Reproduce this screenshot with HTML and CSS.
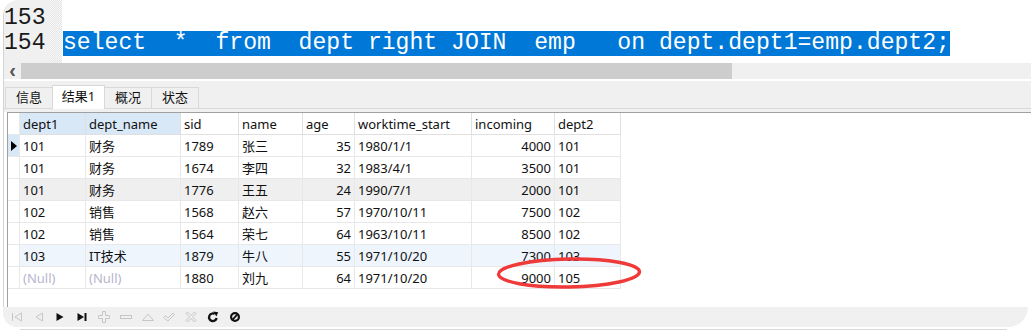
FILE: index.html
```html
<!DOCTYPE html>
<html lang="zh-CN">
<head>
    <meta charset="UTF-8">
    <title>查询结果</title>
    <link rel="stylesheet" href="styles.css">
</head>
<body>

<div class="window">
    <div class="editor">
        <div class="gutter">
            <div class="ln">153</div>
            <div class="ln">154</div>
        </div>
        <div class="fold"></div>
        <div class="code">
            <div class="line"></div>
            <div class="line"><span class="sel">select  *  from  dept right JOIN  emp   on dept.dept1=emp.dept2;</span></div>
        </div>
    </div>

    <div class="hscroll">
        <div class="arrow">&lsaquo;</div>
        <div class="thumb"></div>
    </div>

    <div class="tabwrap">
        <div class="tabbar">
            <div class="tab">信息</div>
            <div class="tab active">结果1</div>
            <div class="tab">概况</div>
            <div class="tab">状态</div>
        </div>
    </div>

    <div class="results">
        <div class="grid">
            <div class="row head">
                <div class="cell ind"></div>
                <div class="cell picked">dept1</div>
                <div class="cell picked">dept_name</div>
                <div class="cell">sid</div>
                <div class="cell">name</div>
                <div class="cell">age</div>
                <div class="cell">worktime_start</div>
                <div class="cell">incoming</div>
                <div class="cell">dept2</div>
            </div>
            <div class="row">
                <div class="cell ind current"><span class="caret"></span></div>
                <div class="cell">101</div><div class="cell">财务</div><div class="cell">1789</div><div class="cell">张三</div>
                <div class="cell num">35</div><div class="cell">1980/1/1</div><div class="cell num">4000</div><div class="cell">101</div>
            </div>
            <div class="row">
                <div class="cell ind"></div>
                <div class="cell">101</div><div class="cell">财务</div><div class="cell">1674</div><div class="cell">李四</div>
                <div class="cell num">32</div><div class="cell">1983/4/1</div><div class="cell num">3500</div><div class="cell">101</div>
            </div>
            <div class="row hover">
                <div class="cell ind"></div>
                <div class="cell">101</div><div class="cell">财务</div><div class="cell">1776</div><div class="cell">王五</div>
                <div class="cell num">24</div><div class="cell">1990/7/1</div><div class="cell num">2000</div><div class="cell">101</div>
            </div>
            <div class="row">
                <div class="cell ind"></div>
                <div class="cell">102</div><div class="cell">销售</div><div class="cell">1568</div><div class="cell">赵六</div>
                <div class="cell num">57</div><div class="cell">1970/10/11</div><div class="cell num">7500</div><div class="cell">102</div>
            </div>
            <div class="row">
                <div class="cell ind"></div>
                <div class="cell">102</div><div class="cell">销售</div><div class="cell">1564</div><div class="cell">荣七</div>
                <div class="cell num">64</div><div class="cell">1963/10/11</div><div class="cell num">8500</div><div class="cell">102</div>
            </div>
            <div class="row alt">
                <div class="cell ind"></div>
                <div class="cell">103</div><div class="cell">IT技术</div><div class="cell">1879</div><div class="cell">牛八</div>
                <div class="cell num">55</div><div class="cell">1971/10/20</div><div class="cell num">7300</div><div class="cell">103</div>
            </div>
            <div class="row">
                <div class="cell ind"></div>
                <div class="cell null">(Null)</div><div class="cell null">(Null)</div><div class="cell">1880</div><div class="cell">刘九</div>
                <div class="cell num">64</div><div class="cell">1971/10/20</div><div class="cell num">9000</div><div class="cell">105</div>
            </div>
        </div>
    </div>
</div>

<div class="toolbar">
    <span class="tool"><svg viewBox="0 0 12 12"><path d="M1.5 2v8M10.5 2L4 6l6.5 4z" fill="none" stroke="#c6c6c6"/></svg></span>
    <span class="tool"><svg viewBox="0 0 12 12"><path d="M9.5 2L3 6l6.5 4z" fill="none" stroke="#c6c6c6"/></svg></span>
    <span class="tool"><svg viewBox="0 0 12 12"><path d="M2.5 2l7 4-7 4z" fill="#111"/></svg></span>
    <span class="tool"><svg viewBox="0 0 12 12"><path d="M1.5 2l6.5 4-6.5 4z" fill="#111"/><rect x="8.5" y="2" width="2" height="8" fill="#111"/></svg></span>
    <span class="tool"><svg viewBox="0 0 12 12"><path d="M4.5 0.5h3v4h4v3h-4v4h-3v-4h-4v-3h4z" fill="none" stroke="#c6c6c6"/></svg></span>
    <span class="tool"><svg viewBox="0 0 12 12"><rect x="0.5" y="4.5" width="11" height="3" fill="none" stroke="#c6c6c6"/></svg></span>
    <span class="tool"><svg viewBox="0 0 12 12"><path d="M0.5 9.5L6 3l5.5 6.5z" fill="none" stroke="#c6c6c6"/></svg></span>
    <span class="tool"><svg viewBox="0 0 12 12"><path d="M0.5 6.5l2-2 2.5 2.5 5-5 1.5 1.5-6.5 6.5z" fill="none" stroke="#c6c6c6"/></svg></span>
    <span class="tool"><svg viewBox="0 0 12 12"><path d="M1 2.5L2.5 1 6 4.5 9.5 1 11 2.5 7.5 6 11 9.5 9.5 11 6 7.5 2.5 11 1 9.5 4.5 6z" fill="none" stroke="#c6c6c6"/></svg></span>
    <span class="tool"><svg viewBox="0 0 12 12"><path d="M9.6 7A3.8 3.8 0 1 1 7.6 2.9" fill="none" stroke="#111" stroke-width="2.3"/><path d="M6.2 0.6L11.2 1.2 9.4 5.6z" fill="#111"/></svg></span>
    <span class="tool"><svg viewBox="0 0 12 12"><circle cx="6" cy="6" r="3.9" fill="none" stroke="#111" stroke-width="2.2"/><path d="M8.4 3.4L3.6 8.6" stroke="#111" stroke-width="1.8"/></svg></span>
</div>
<div class="edge"></div>

<svg class="mark" width="160" height="40" viewBox="0 0 160 40">
    <ellipse cx="80" cy="19" rx="70.5" ry="14" fill="none" stroke="#ef3a3a" stroke-width="3.4" transform="rotate(-1 80 19)"/>
</svg>

</body>
</html>
```

FILE: styles.css
```css
body { margin: 0; width: 1031px; height: 334px; overflow: hidden; background: #fff; position: relative; font-family: "Noto Sans", "Noto Sans CJK SC", sans-serif; font-size: 13px; color: #111; }

.window { margin-left: 3px; border-left: 1px solid #d4d4d4; border-top-left-radius: 16px; overflow: hidden; }

/* sql editor */
.editor { display: flex; height: 63px; font-family: "Liberation Mono", monospace; font-size: 23.1px; }
.gutter { width: 46px; background: #f0f0f0; padding-top: 6px; color: #1a1a1a; }
.ln { height: 25px; line-height: 25px; }
.fold { width: 12px; background: repeating-conic-gradient(#e4e4e4 0 25%, #fafafa 0 50%) 0 0 / 2px 2px; }
.code { flex: 1; padding-top: 6px; padding-left: 1px; }
.line { height: 25px; line-height: 25px; white-space: pre; }
.sel { display: inline-block; height: 25px; background: #0078d7; color: #fff; }

.hscroll { display: flex; height: 16px; background: #f0f0f0; }
.arrow { width: 17px; font-family: "Liberation Sans", sans-serif; font-size: 20px; font-weight: bold; line-height: 14px; text-align: center; color: #555; }
.thumb { width: 711px; background: #cdcdcd; }

/* result tabs */
.tabwrap { margin-top: 2px; background: #f0f0f0; padding-bottom: 3px; }
.tabbar { display: flex; align-items: flex-end; height: 27px; padding-left: 1px; border-bottom: 1px solid #d9d9d9; }
.tab { width: 46px; height: 20px; line-height: 19px; margin-left: -1px; border: 1px solid #d9d9d9; border-bottom: none; text-align: center; background: #f0f0f0; }
.tab:first-child { margin-left: 0; }
.tab.active { width: 51px; height: 23px; line-height: 21px; margin-bottom: -1px; background: #fff; position: relative; }

/* data grid */
.results { background: #fff; padding-left: 3px; }
.grid { height: 194px; border-top: 1px solid #a0a0a0; border-left: 1px solid #a0a0a0; }
.row { display: grid; grid-template-columns: 12px 66px 95px 58px 64px 52px 117px 83px 66px; height: 22px; }
.cell { box-sizing: border-box; display: flex; align-items: center; padding: 0 3px; border-right: 1px solid #e8e8e8; border-bottom: 1px solid #e8e8e8; white-space: nowrap; }
.head .cell { border-color: #e0e0e0; }
.head .picked { background: #d9e8f7; }
.cell.num { justify-content: flex-end; }
.cell.null { color: #b6b6cc; }
.cell.ind { padding: 0; border-color: #e8e8e8; }
.cell.current { background: #d9e8f7; }
.caret { width: 0; height: 0; margin-left: 3px; border-top: 5px solid transparent; border-bottom: 5px solid transparent; border-left: 6px solid #000; }
.hover .cell { background: #efefef; }
.hover .cell.ind { background: #fff; }
.alt .cell { background: #eef5fd; }
.alt .cell.ind { background: #fff; }

/* bottom navigation bar */
.toolbar { display: flex; align-items: center; height: 20px; margin: 0 3px 0 3px; padding-left: 3px; background: #f0f0f0; border-radius: 0 0 20px 14px; }
.tool { width: 21.8px; height: 12px; display: flex; justify-content: center; }
.tool svg { width: 12px; height: 12px; }
.edge { margin: 2px 24px 0 20px; border-top: 1px solid #d8d8d8; }

.mark { position: absolute; left: 489px; top: 254px; }
```
